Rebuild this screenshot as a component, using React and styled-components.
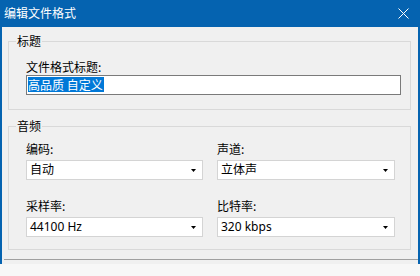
import React from "react";
import styled, { createGlobalStyle } from "styled-components";

const Global = createGlobalStyle`
  html, body { margin: 0; padding: 0; background: #f7f7f7; }
  body { font-family: "Noto Sans", "Noto Sans CJK SC", sans-serif; font-size: 12px; color: #000; }
  * { box-sizing: border-box; }
`;

const Window = styled.div`
  width: 420px;
  height: 264px;
  background: #f0f0f0;
  border-left: 2px solid #0563b0;
  border-right: 2px solid #0563b0;
  display: flex;
  flex-direction: column;
`;

const TitleBar = styled.div`
  height: 27px;
  flex: none;
  background: #0563b0;
  color: #fff;
  display: flex;
  align-items: center;
  justify-content: space-between;
  padding: 0 9px 1px 2px;
  font-family: "Noto Sans CJK SC", sans-serif;
  font-size: 12px;
  line-height: 14px;
`;

const Content = styled.div`
  flex: 1;
  padding: 7px 7px 0 6px;
  display: flex;
  flex-direction: column;
`;

const Group = styled.fieldset`
  margin: 0 0 ${(p) => p.$gap || 0}px 0;
  padding: 0;
  border: 1px solid #d9d9d9;
  min-inline-size: 0;
`;

const Legend = styled.legend`
  margin-left: 7px;
  padding: 0 1px;
  font-family: "Noto Sans CJK SC", sans-serif;
  font-size: 12px;
  line-height: 14px;
`;

const Body = styled.div`
  padding: ${(p) => p.$pad};
`;

const Label = styled.div`
  font-family: "Noto Sans CJK SC", sans-serif;
  font-size: 12px;
  line-height: 14px;
  margin-bottom: ${(p) => p.$gap}px;
`;

const TextBox = styled.div`
  height: 20px;
  background: #fff;
  border: 1px solid #7a7a7a;
  padding: 1px 0 0 1px;
`;

const Selected = styled.span`
  display: inline-block;
  background: #0078d7;
  color: #fff;
  font-family: "Noto Sans CJK SC", sans-serif;
  font-size: 12px;
  line-height: 15px;
  height: 15px;
  padding: 0 1px 0 0;
`;

const Grid = styled.div`
  display: grid;
  grid-template-columns: 177px 178px;
  column-gap: 14px;
  row-gap: 19px;
`;

const Field = styled.div`
  display: flex;
  flex-direction: column;
`;

const Combo = styled.div`
  height: 20px;
  background: #fff;
  border: 1px solid #d4d4d4;
  display: flex;
  align-items: center;
  justify-content: space-between;
  padding: 0 6px 0 3px;
  font-size: 12px;
  line-height: 14px;
`;

const Separator = styled.div`
  margin-top: 9px;
  height: 1px;
  background: #a0a0a0;
  margin-left: -4px;
  margin-right: -7px;
`;

const Arrow = () => (
  <svg width="5" height="3" viewBox="0 0 5 3">
    <polygon points="0,0 5,0 2.5,3" fill="#000" />
  </svg>
);

const CloseIcon = () => (
  <svg width="11" height="11" viewBox="0 0 11 11">
    <path d="M0.5 0.5 L10.5 10.5 M10.5 0.5 L0.5 10.5" stroke="#fff" strokeWidth="1" fill="none" />
  </svg>
);

const combos = [
  { label: "编码:", value: "自动" },
  { label: "声道:", value: "立体声" },
  { label: "采样率:", value: "44100 Hz" },
  { label: "比特率:", value: "320 kbps" },
];

export default function App() {
  return (
    <>
      <Global />
      <Window>
        <TitleBar>
          <span>编辑文件格式</span>
          <CloseIcon />
        </TitleBar>
        <Content>
          <Group $gap={9}>
            <Legend>标题</Legend>
            <Body $pad="12px 9px 14px 17px">
              <Label $gap={1}>文件格式标题:</Label>
              <TextBox>
                <Selected>高品质 自定义</Selected>
              </TextBox>
            </Body>
          </Group>
          <Group>
            <Legend>音频</Legend>
            <Body $pad="9px 15px 12px 17px">
              <Grid>
                {combos.map((c) => (
                  <Field key={c.label}>
                    <Label $gap={4}>{c.label}</Label>
                    <Combo>
                      <span>{c.value}</span>
                      <Arrow />
                    </Combo>
                  </Field>
                ))}
              </Grid>
            </Body>
          </Group>
          <Separator />
        </Content>
      </Window>
    </>
  );
}
